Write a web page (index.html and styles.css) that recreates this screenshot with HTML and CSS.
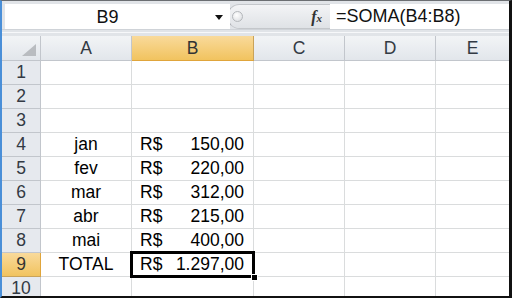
FILE: index.html
```html
<!DOCTYPE html>
<html lang="pt">
<head>
<meta charset="utf-8">
<title>Excel - SOMA</title>
<link rel="stylesheet" href="styles.css">
</head>
<body>
<div class="window">
  <div class="fbar">
    <div class="namebox">
      <span class="name">B9</span>
      <svg class="drop" width="8" height="5" viewBox="0 0 8 5"><path d="M0 0H8L4 5Z" fill="#111"/></svg>
    </div>
    <div class="pill">
      <span class="knob"></span>
      <span class="fx"><i>f</i><span class="sx">x</span></span>
    </div>
    <div class="formula">=SOMA(B4:B8)</div>
  </div>
  <div class="fsep"></div>
  <div class="sheet">
    <div class="hd corner"><svg class="tri" width="14" height="12" viewBox="0 0 14 12"><path d="M14 0V12H0Z" fill="#b9bcc0"/></svg></div>
    <div class="hd col">A</div>
    <div class="hd col sel">B</div>
    <div class="hd col">C</div>
    <div class="hd col">D</div>
    <div class="hd col last">E</div>

    <div class="hd row">1</div><div class="c"></div><div class="c"></div><div class="c"></div><div class="c"></div><div class="c last"></div>
    <div class="hd row">2</div><div class="c"></div><div class="c"></div><div class="c"></div><div class="c"></div><div class="c last"></div>
    <div class="hd row">3</div><div class="c"></div><div class="c"></div><div class="c"></div><div class="c"></div><div class="c last"></div>

    <div class="hd row">4</div><div class="c ctr">jan</div><div class="c acc"><span>R$</span><span>150,00</span></div><div class="c"></div><div class="c"></div><div class="c last"></div>
    <div class="hd row">5</div><div class="c ctr">fev</div><div class="c acc"><span>R$</span><span>220,00</span></div><div class="c"></div><div class="c"></div><div class="c last"></div>
    <div class="hd row">6</div><div class="c ctr">mar</div><div class="c acc"><span>R$</span><span>312,00</span></div><div class="c"></div><div class="c"></div><div class="c last"></div>
    <div class="hd row">7</div><div class="c ctr">abr</div><div class="c acc"><span>R$</span><span>215,00</span></div><div class="c"></div><div class="c"></div><div class="c last"></div>
    <div class="hd row">8</div><div class="c ctr">mai</div><div class="c acc"><span>R$</span><span>400,00</span></div><div class="c"></div><div class="c"></div><div class="c last"></div>
    <div class="hd row sel">9</div><div class="c ctr">TOTAL</div><div class="c acc active"><span>R$</span><span>1.297,00</span><i class="handle"></i></div><div class="c"></div><div class="c"></div><div class="c last"></div>
    <div class="hd row">10</div><div class="c"></div><div class="c"></div><div class="c"></div><div class="c"></div><div class="c last"></div>
  </div>
</div>
</body>
</html>
```
FILE: styles.css
```css
* { box-sizing: border-box; }
html, body { margin: 0; padding: 0; background: #fff; }
body { font-family: "Liberation Sans", Arial, sans-serif; }

.window {
  width: 512px;
  height: 298px;
  overflow: hidden;
  border-left: 2px solid #4a8fd8;
  border-top: 1px solid #6b6e72;
  border-right: 3px solid #111;
  border-bottom: 2px solid #111;
  background: #fff;
}

.fbar {
  height: 28px;
  padding-top: 3px;
  padding-left: 3px;
  background: #e1e4e8;
  display: flex;
  align-items: stretch;
}
.namebox {
  width: 225px;
  background: #fff;
  display: flex;
  align-items: center;
  position: relative;
}
.name {
  width: 205px;
  text-align: center;
  font-size: 18px;
  color: #111;
  padding-top: 1px;
}
.drop { margin-left: 5px; margin-top: 2px; }
.pill {
  width: 103px;
  border-left: 1px solid #a8abb0;
  border-top: 1px solid #c4c7cb;
  border-bottom: 1px solid #c4c7cb;
  border-radius: 13px 0 0 13px;
  background: linear-gradient(#f3f4f6, #dfe2e6);
  display: flex;
  align-items: center;
  padding-left: 4px;
  margin-left: -3px;
}
.knob {
  width: 11px;
  height: 11px;
  border-radius: 50%;
  border: 1px solid #b4b7bb;
  background: radial-gradient(circle at 40% 35%, #fff, #d6d9dd);
}
.fx {
  margin-left: auto;
  margin-right: 8px;
  font-family: "Liberation Serif", "Times New Roman", serif;
  font-weight: bold;
  font-size: 16px;
  color: #333;
}
.fx i { font-style: italic; }
.sx { font-size: 11px; font-style: italic; }
.formula {
  flex: 1;
  background: #fff;
  font-size: 18px;
  color: #111;
  padding-left: 6px;
  line-height: 25px;
}
.fsep {
  height: 7px;
  background: #e1e4e8;
  border-top: 1px solid #cfd3d8;
  position: relative;
}
.fsep::after {
  content: "";
  display: block;
  margin-top: 2px;
  height: 1px;
  background: #f7f8fa;
}

.sheet {
  display: grid;
  grid-template-columns: 39px 91px 122px 91px 91px 1fr;
  grid-template-rows: 25px repeat(10, 24px);
  font-size: 17.5px;
  color: #000;
}
.sheet > div {
  border-right: 1px solid #dadcdd;
  border-bottom: 1px solid #dadcdd;
  line-height: 23px;
  white-space: nowrap;
}
.sheet > .last { border-right: none; }

.hd {
  background: linear-gradient(#f2f4f6, #e2e6eb);
  color: #333a44;
  text-align: center;
}
.sheet > .hd { border-color: #c2c6cc; }
.hd.col { line-height: 24px; }
.hd.row { background: #e6e9ee; }
.hd.sel {
  background: linear-gradient(#f9da9b, #f1c35f);
  color: #333;
}
.sheet > .hd.col.sel { border-bottom-color: #e0a53b; border-right-color: #c9a35a; }
.sheet > .hd.row.sel { border-right-color: #e0a53b; border-bottom-color: #c9a35a; }
.corner { position: relative; }
.tri { position: absolute; right: 4px; bottom: 4px; }

.ctr { text-align: center; }
.acc {
  display: flex;
  justify-content: space-between;
  padding: 0 9px 0 8px;
}
.active { position: relative; }
.active::after {
  content: "";
  position: absolute;
  left: -2px;
  top: -2px;
  right: -2px;
  bottom: -2px;
  border: 3px solid #000;
}
.handle {
  position: absolute;
  right: -5px;
  bottom: -5px;
  width: 7px;
  height: 7px;
  background: #000;
  border: 1px solid #fff;
  z-index: 2;
}
```
